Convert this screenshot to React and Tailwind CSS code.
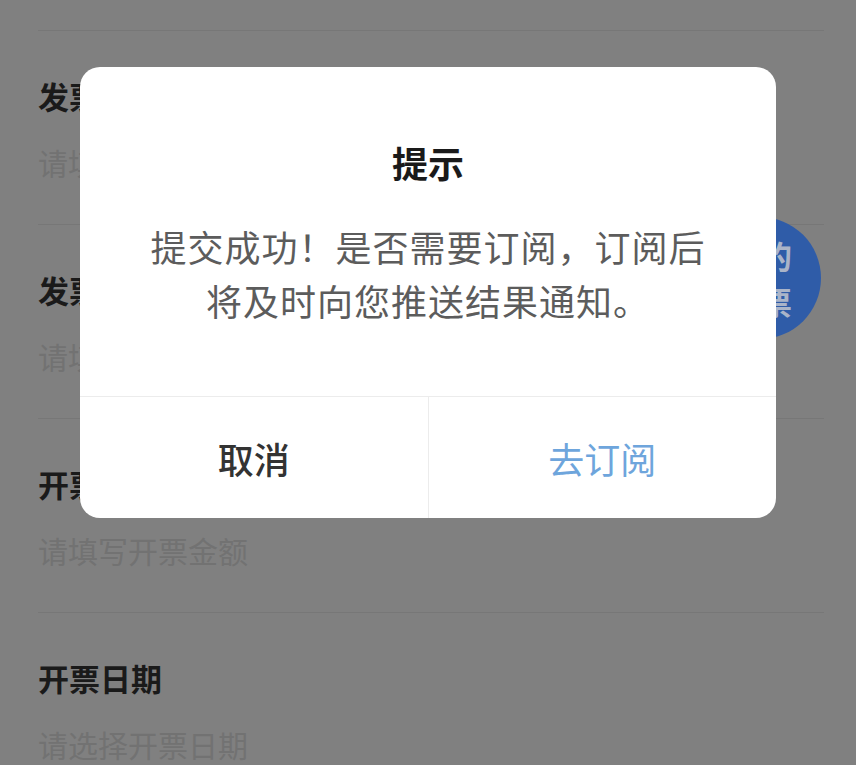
import React from 'react';

const rows = [
  { label: '发票代码', placeholder: '请填写发票代码' },
  { label: '发票号码', placeholder: '请填写发票号码' },
  { label: '开票金额', placeholder: '请填写开票金额' },
  { label: '开票日期', placeholder: '请选择开票日期' },
];

export default function App() {
  return (
    <div
      className="relative h-[765px] w-full overflow-hidden bg-[#808080]"
      style={{ fontFamily: '"Noto Sans CJK SC", "Noto Sans", sans-serif' }}
    >
      {/* 表单（在遮罩下） */}
      <div className="pt-[30px] pl-[38px] pr-[32px]">
        {rows.map((row) => (
          <div key={row.label} className="border-t border-[#777777] pt-[45px] pb-[42px]">
            <div className="text-[31px] leading-[40px] font-bold text-[#1a1a1a]">{row.label}</div>
            <div className="mt-[26px] text-[30px] leading-[40px] text-[#727272]">{row.placeholder}</div>
          </div>
        ))}
      </div>

      {/* 悬浮按钮 */}
      <div className="absolute left-[699px] top-[217px] flex h-[122px] w-[122px] flex-col items-center justify-center rounded-full bg-[#2f5ca8] text-[32px] leading-[46px] font-bold text-[#aab4c8]">
        <span>我的</span>
        <span>发票</span>
      </div>

      {/* 弹窗 */}
      <div className="absolute inset-0 flex justify-center pt-[67px]">
        <div className="h-fit w-[696px] overflow-hidden rounded-[20px] bg-white">
          <div className="px-10 pt-[70px] pb-[69px] text-center">
            <div className="text-[36px] leading-[50px] font-bold text-[#1a1a1a]">提示</div>
            <div className="mt-[32px] text-[36px] leading-[54px] tracking-[1px] text-[#5c5c5c]">
              提交成功！是否需要订阅，订阅后
              <br />
              将及时向您推送结果通知。
            </div>
          </div>
          <div className="flex border-t border-[#ececec]">
            <button className="flex h-[121px] flex-1 items-center justify-center text-[36px] font-medium text-[#333333]">
              取消
            </button>
            <div className="w-px bg-[#ececec]" />
            <button className="flex h-[121px] flex-1 items-center justify-center text-[36px] text-[#6ea5dc]">
              去订阅
            </button>
          </div>
        </div>
      </div>
    </div>
  );
}
